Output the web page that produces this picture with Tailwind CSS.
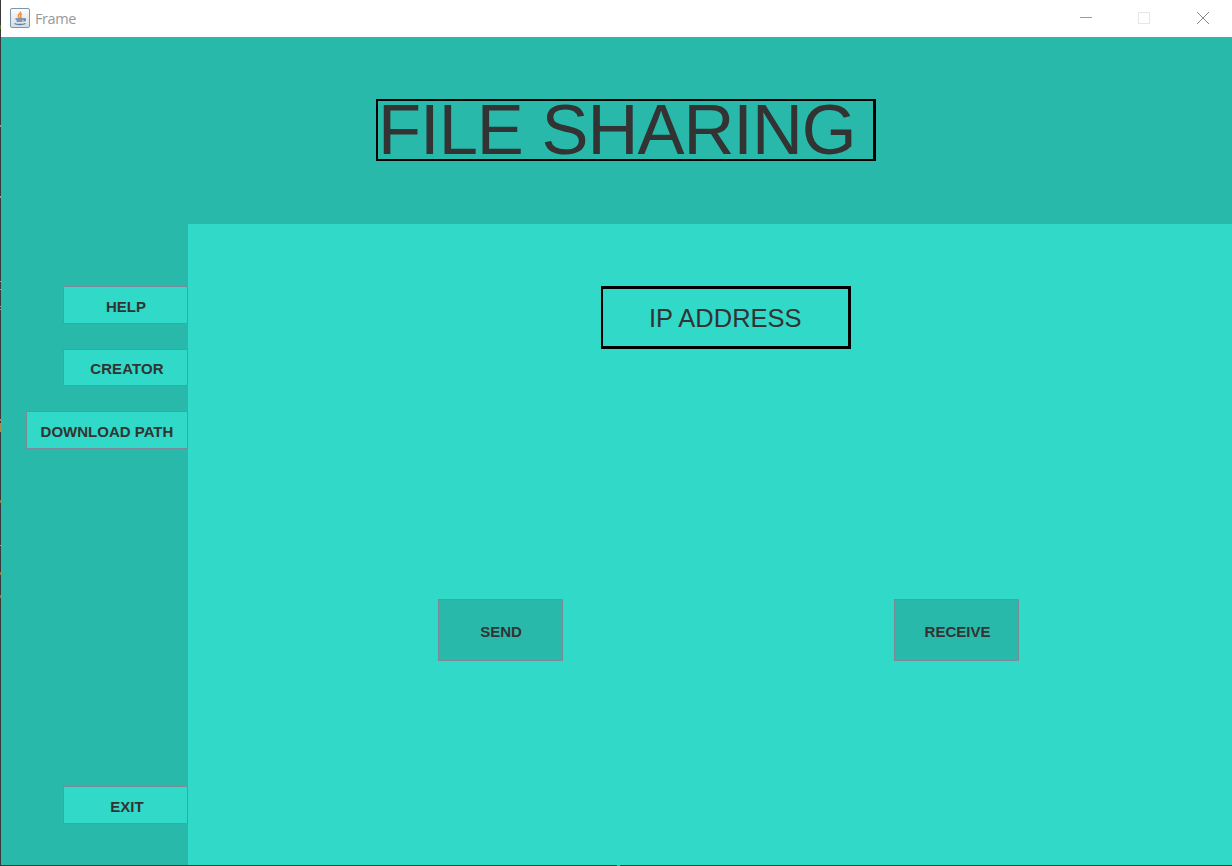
<!DOCTYPE html>
<html lang="en">
<head>
<meta charset="utf-8">
<title>Frame</title>
<script src="https://cdn.jsdelivr.net/npm/@tailwindcss/browser@4"></script>
</head>
<body class="relative w-[1232px] h-[866px] overflow-hidden bg-[#3a3a3a] pl-px pb-px font-['Liberation_Sans',Arial,sans-serif] text-[#333333]">
<!-- Slivers of the desktop behind the window -->
<svg class="absolute left-0 top-0 h-[866px] w-px" viewBox="0 0 1 866" shape-rendering="crispEdges">
  <path fill="#4c7a2e" d="M0 25h1v4h-1z"/>
  <path fill="#9a9a9a" d="M0 125h1v2h-1zM0 196h1v2h-1zM0 281h1v1h-1zM0 289h1v1h-1zM0 306h1v1h-1zM0 309h1v1h-1zM0 545h1v1h-1z"/>
  <path fill="#b08a4a" d="M0 419h1v2h-1zM0 423h1v9h-1z"/>
  <path fill="#8a7a40" d="M0 500h1v3h-1zM0 572h1v3h-1zM0 595h1v3h-1z"/>
</svg>
<div class="absolute bottom-0 left-[617px] h-px w-[3px] bg-[#8aa09e]"></div>
<div class="flex h-[865px] w-[1231px] flex-col">
  <header class="flex h-[37px] shrink-0 items-center bg-white">
    <svg class="ml-[9px] -mt-px h-5 w-5 shrink-0" viewBox="0 0 20 20" fill="none">
      <defs><linearGradient id="g" x1="0" y1="0" x2="0" y2="1"><stop offset="0" stop-color="#fdfdfd"/><stop offset="1" stop-color="#d3dbe2"/></linearGradient></defs>
      <rect x=".5" y=".5" width="19" height="19" rx="1.5" fill="url(#g)" stroke="#7e96a9"/>
      <path d="M10.500 3.500c1 1.800-3 2.800-2.300 4.600.2.7 1 1.100 1.200 1.900M12 6c-1.500.8-2 1.500-1.200 2.500.4.7 0 1.200-.5 1.500" stroke="#ee8d3c" stroke-width="1.500"/>
      <path d="M5.500 11h8M6.500 13h6M13.500 11c2.500-.8 2.500 1.500 0 2M4.500 15.500c2 1.300 8.500 1.300 11 0" stroke="#5d7f9d" stroke-width="1.400"/>
    </svg>
    <span class="ml-[5px] mt-px font-['Open_Sans',sans-serif] text-[14.5px] leading-5 tracking-[-0.4px] text-[#999999]">Frame</span>
    <div class="ml-auto flex h-full items-center">
      <svg class="h-[37px] w-[152px]" viewBox="0 0 152 37" fill="none" shape-rendering="crispEdges">
        <path d="M0 17.500h12" stroke="#999"/>
        <rect x="58.500" y="12.500" width="11" height="11" stroke="#e6e6e6"/>
        <path d="M117 12l12 12M129 12l-12 12" stroke="#888" shape-rendering="auto"/>
      </svg>
    </div>
  </header>
  <section class="flex h-[187px] shrink-0 justify-center bg-[#29b9ab] pt-[62px] pl-[19px]">
    <h1 class="h-[62px] w-[500px] overflow-visible whitespace-nowrap border-2 border-r-[3px] border-black text-[70.5px] leading-[57px] tracking-[-1px]">FILE SHARING</h1>
  </section>
  <div class="flex min-h-0 flex-1">
    <nav class="flex w-[187px] shrink-0 flex-col items-end bg-[#29b9ab] pt-[62px] text-[15px] font-bold">
      <button class="h-[38px] w-[125px] border border-[#7a8a99] bg-[#30d9c8] pt-[4px] pl-px">HELP</button>
      <button class="mt-[25px] h-[37px] w-[125px] border border-[#7a8a99] bg-[#30d9c8] pt-[4px] pl-[3px] tracking-[0.1px]">CREATOR</button>
      <button class="mt-[25px] h-[38px] w-[162px] border border-[#7a8a99] bg-[#30d9c8] pt-[4px]">DOWNLOAD PATH</button>
      <button class="mt-[337px] h-[38px] w-[125px] border border-[#7a8a99] bg-[#30d9c8] pt-[4px] pl-[3px]">EXIT</button>
    </nav>
    <main class="flex-1 bg-[#30d9c8] pt-[62px]">
      <div class="ml-[413px] h-[63px] w-[250px] border-[3px] border-l-2 border-black pl-[46px] text-[25.5px] leading-[59px]">IP ADDRESS</div>
      <div class="mt-[250px] ml-[250px] flex gap-[331px] text-[15px] font-bold">
        <button class="h-[62px] w-[125px] border border-[#7a8a99] bg-[#29b9ab] pt-[4px] pl-px">SEND</button>
        <button class="h-[62px] w-[125px] border border-[#7a8a99] bg-[#29b9ab] pt-[4px] pl-[2px]">RECEIVE</button>
      </div>
    </main>
  </div>
</div>
</body>
</html>
